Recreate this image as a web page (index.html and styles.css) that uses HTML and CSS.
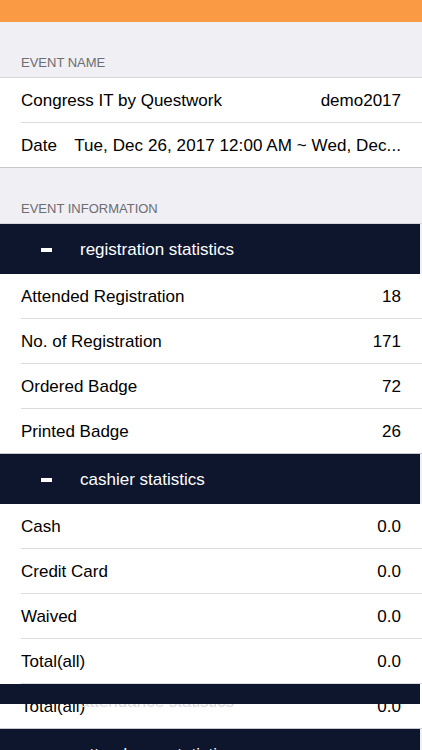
FILE: index.html
```html
<!DOCTYPE html>
<html>
	<head>
		<meta charset="UTF-8">
		<title>Event</title>
		<link rel="stylesheet" href="styles.css">
	</head>
	<body>
		<div id="bar"></div>
		<div class="title">EVENT NAME</div>
		<div class="group">
			<div class="row"><span>Congress IT by Questwork</span><span class="val">demo2017</span></div>
			<div class="row"><span>Date</span><span class="val date">Tue, Dec 26, 2017 12:00 AM ~ Wed, Dec...</span></div>
		</div>
		<div class="title">EVENT INFORMATION</div>
		<div class="head"><span class="dash"></span>registration statistics</div>
		<div class="group">
			<div class="row"><span>Attended Registration</span><span class="val">18</span></div>
			<div class="row"><span>No. of Registration</span><span class="val">171</span></div>
			<div class="row"><span>Ordered Badge</span><span class="val">72</span></div>
			<div class="row"><span>Printed Badge</span><span class="val">26</span></div>
		</div>
		<div class="head"><span class="dash"></span>cashier statistics</div>
		<div class="group">
			<div class="row"><span>Cash</span><span class="val">0.0</span></div>
			<div class="row"><span>Credit Card</span><span class="val">0.0</span></div>
			<div class="row"><span>Waived</span><span class="val">0.0</span></div>
			<div class="row"><span>Total(all)</span><span class="val">0.0</span></div>
			<div class="row ghost">
				<span>Total(all)</span><span class="val">0.0</span>
				<span class="faint">attendance statistics</span>
				<div class="cover"></div>
			</div>
		</div>
		<div class="head"><span class="dash"></span>attendance statistics</div>
	</body>
</html>
```

FILE: styles.css
```css
html, body{
	margin: 0;
	overflow: hidden;
}
body{
	width: 422px;
	height: 750px;
	background: #efeff4;
	font-family: "Liberation Sans", Arial, sans-serif;
	color: #000;
}
#bar{
	height: 22px;
	background: #fb9a45;
}
.title{
	height: 56px;
	box-sizing: border-box;
	padding: 0 0 7px 21px;
	display: flex;
	align-items: flex-end;
	font-size: 13px;
	color: #6d6d72;
	border-bottom: 1px solid #d6d6da;
}
.group{
	background: #fff;
	border-bottom: 1px solid #c8c7cc;
}
.row{
	height: 45px;
	box-sizing: border-box;
	padding-top: 2px;
	margin-left: 21px;
	padding-right: 21px;
	display: flex;
	align-items: center;
	justify-content: space-between;
	font-size: 17px;
	border-bottom: 1px solid #dcdce0;
	white-space: nowrap;
}
.group .row:last-child{
	border-bottom: none;
	height: 44px;
}
.val{
	margin-left: 20px;
}
.date{
	margin-left: 16px;
	letter-spacing: 0.08px;
}
.head{
	height: 50px;
	box-sizing: border-box;
	padding-top: 2px;
	background: #0d162d;
	color: #fff;
	font-size: 17px;
	display: flex;
	align-items: center;
	padding-left: 41px;
	margin-right: 2px;
}
.dash{
	width: 11px;
	height: 4px;
	background: #fff;
	margin-right: 28px;
}
.ghost{
	position: relative;
}
.faint{
	position: absolute;
	left: 59px;
	top: 8px;
	color: #d9d9de;
}
.cover{
	position: absolute;
	left: -21px;
	right: 2px;
	top: 0;
	height: 20px;
	background: #0d162d;
}
```
